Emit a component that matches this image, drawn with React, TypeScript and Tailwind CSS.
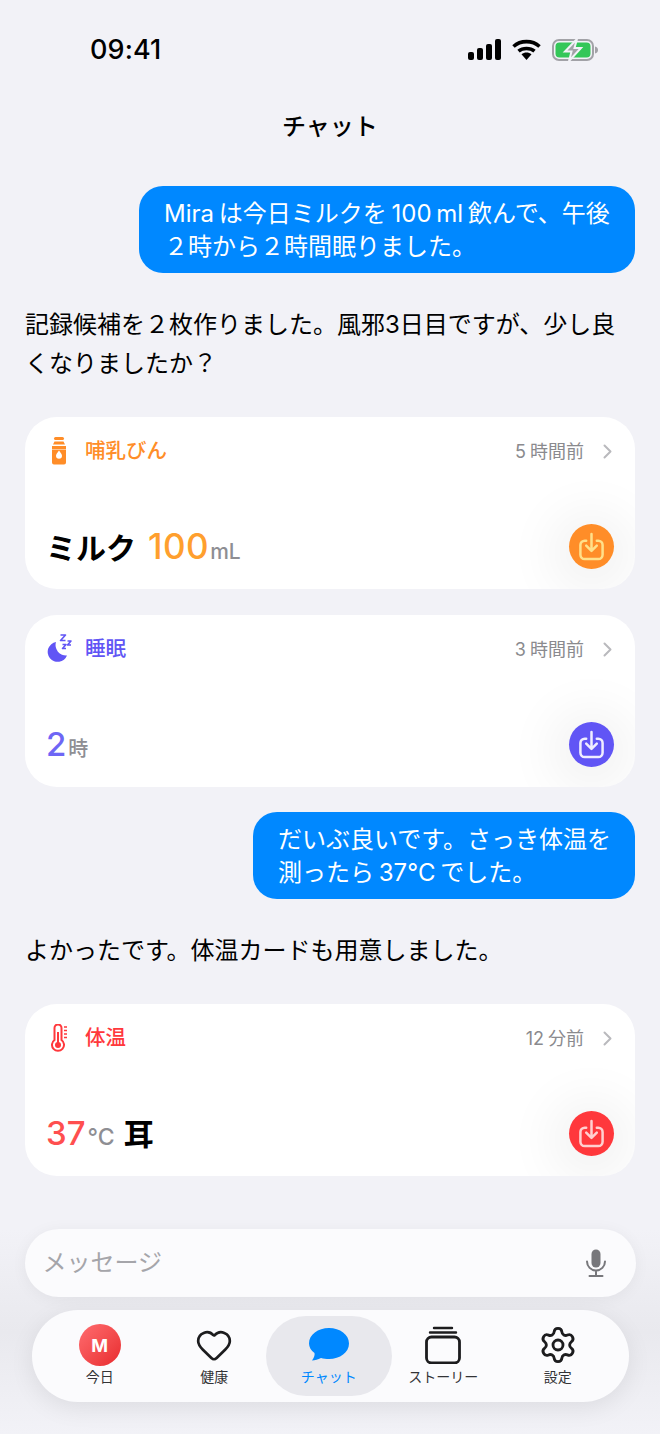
import { Heart, Settings } from "lucide-react";
import type { ReactNode } from "react";

const FONT = "font-['Inter','Noto_Sans_CJK_JP',sans-serif]";

function StatusBar() {
  return (
    <div className="flex h-[99px] items-center justify-between pl-[90px] pr-[62px]">
      <span className="text-[27px] font-medium leading-none tracking-[0.1px] text-black">09:41</span>
      <div className="flex items-center gap-[11px]">
        <svg width="33" height="21" viewBox="0 0 33 21" fill="#000">
          <rect x="0" y="13" width="6" height="8" rx="2" />
          <rect x="9" y="9" width="6" height="12" rx="2" />
          <rect x="18" y="5" width="6" height="16" rx="2" />
          <rect x="27" y="0" width="6" height="21" rx="2" />
        </svg>
        <svg width="29" height="21" viewBox="0 0 29 21" fill="none" stroke="#000" strokeWidth="3.6">
          <path d="M1.5 7.5C8.500 1 20.500 1 27.500 7.500" />
          <path d="M6.500 12.200C10.800 8.600 18.200 8.600 22.500 12.200" />
          <path d="M9.500 15.200 14.500 21l5-5.800C16.500 13 12.500 13 9.500 15.200Z" fill="#000" stroke="none" />
        </svg>
        <svg width="46" height="24" viewBox="0 0 46 24" fill="none">
          <rect x="1" y="2" width="40" height="20" rx="6" stroke="#a2a2a7" strokeWidth="2" />
          <rect x="3.500" y="4.500" width="35" height="15" rx="4" fill="#34c759" />
          <path d="M43 8.500c2 .5 3 1.800 3 3.500s-1 3-3 3.500z" fill="#a2a2a7" />
          <path d="M25 1 13 13.500H19.500L17 23 29 10H22.500Z" fill="#a2a2a7" stroke="#f2f2f7" strokeWidth="2" />
        </svg>
      </div>
    </div>
  );
}

function UserBubble({ width, lines }: { width: string; lines: string[] }) {
  return (
    <div className={`ml-auto rounded-[24px] bg-[#0088ff] pb-[10px] pl-[25px] pt-[11px] text-[24px] leading-[33px] text-white [word-spacing:-2px] ${width}`}>
      {lines.map((l) => (
        <div key={l} className="whitespace-nowrap">
          {l}
        </div>
      ))}
    </div>
  );
}

function SaveButton({ bg, stroke }: { bg: string; stroke: string }) {
  return (
    <div className={`flex size-[45px] items-center justify-center rounded-full shadow-[0_6px_50px_20px_rgba(0,0,0,0.05)] ${bg}`}>
      <svg width="27" height="29" viewBox="0 0 28 30" fill="none" stroke={stroke} strokeWidth="2.600" strokeLinecap="round" strokeLinejoin="round">
        <path d="M8.500 9H7a4.500 4.500 0 0 0-4.500 4.500v10A4.500 4.500 0 0 0 7 28h14a4.500 4.500 0 0 0 4.500-4.500v-10A4.500 4.500 0 0 0 21 9h-1.500" />
        <path d="M14 2v17M8.500 14l5.500 5.500 5.500-5.500" />
      </svg>
    </div>
  );
}

function Card({
  icon,
  title,
  titleColor,
  ago,
  save,
  children,
}: {
  icon: ReactNode;
  title: string;
  titleColor: string;
  ago: string;
  save: ReactNode;
  children: ReactNode;
}) {
  return (
    <div className="flex h-[172px] flex-col overflow-hidden rounded-[32px] bg-white px-[21px]">
      <div className="flex h-[68px] items-center">
        <div className="flex w-[39px] items-center">{icon}</div>
        <span className={`text-[20.500px] font-medium ${titleColor}`}>{title}</span>
        <span className="ml-auto text-[18px] text-[#8a8a8e] [word-spacing:-1px]">{ago}</span>
        <svg className="ml-[19px] mr-[2px]" width="9" height="15" viewBox="0 0 9 15" fill="none" stroke="#b9b9bd" strokeWidth="2" strokeLinecap="round" strokeLinejoin="round">
          <path d="M1.500 1.500 7.500 7.500 1.500 13.500" />
        </svg>
      </div>
      <div className="mb-[20px] mt-auto flex h-[45px] items-center justify-between">
        <div className="flex items-baseline">{children}</div>
        {save}
      </div>
    </div>
  );
}

function TabItem({ icon, label, active }: { icon: ReactNode; label: string; active?: boolean }) {
  return (
    <div className="flex justify-center">
      <div className={`flex shrink-0 flex-col items-center pb-[3px] ${active ? "h-[80px] w-[126px] justify-center rounded-[40px] bg-[#e8e8ed]" : "w-[100px]"}`}>
        <div className="flex h-[44px] items-center justify-center">{icon}</div>
        <span className={`mt-[1px] whitespace-nowrap text-[14px] leading-[18px] ${active ? "text-[#0088ff]" : "text-[#333336]"}`}>{label}</span>
      </div>
    </div>
  );
}

export default function App() {
  return (
    <div className={`relative flex h-[1434px] w-[660px] flex-col overflow-hidden bg-[#f2f2f7] ${FONT}`}>
      <StatusBar />
      <div className="text-center text-[24px] font-medium leading-[56px] text-black">チャット</div>
      <div className="flex flex-col px-[25px] pt-[31px]">
        <UserBubble width="w-[496px]" lines={["Mira は今日ミルクを 100 ml 飲んで、午後", "２時から２時間眠りました。"]} />
        <p className="mt-[32px] w-[600px] text-[24px] leading-[39px] text-black">
          記録候補を２枚作りました。風邪3日目ですが、少し良くなりましたか？
        </p>
        <div className="mt-[34px] flex flex-col gap-[26px]">
          <Card
            icon={
              <svg className="ml-[5px]" width="16" height="28" viewBox="0 0 16 28" fill="#ff8d28">
                <rect x="3" y="0" width="10" height="3" rx="1.500" />
                <path d="M3.500 4.500h9l1.500 3h-12zM1 9h14v3H1zM1 23h14v2.500a2 2 0 0 1-2 2H3a2 2 0 0 1-2-2z" />
                <path fillRule="evenodd" d="M1 12.500h14V23H1zM8 13.500c-1.800 2.500-3 3.800-3 5.300a3 3 0 0 0 6 0c0-1.500-1.200-2.800-3-5.300z" />
              </svg>
            }
            title="哺乳びん"
            titleColor="text-[#ff8d28]"
            ago="5 時間前"
            save={<SaveButton bg="bg-[#ff8d28]" stroke="#ffe08a" />}
          >
            <span className="text-[30px] font-semibold text-black">ミルク</span>
            <span className="ml-[12px] text-[35px] font-medium tracking-[0.5px] text-[#ff9f2e]">100</span>
            <span className="ml-[1px] text-[21px] font-medium text-[#8e8e93]">mL</span>
          </Card>
          <Card
            icon={
              <svg width="26" height="30" viewBox="0 0 26 30" fill="#6155f5">
                <path d="M10 8A10 10 0 1 0 21 21.500 10.500 10.500 0 0 1 10 8Z" />
                <g fill="none" stroke="#6155f5" strokeWidth="1.600" strokeLinejoin="round">
                  <path d="M14.500 1h5l-5 5.500h5" />
                  <path d="M21.500 7h3.500l-3.500 4h3.500" />
                  <path d="M16.500 10.500h3.500l-3.500 4h3.500" />
                </g>
              </svg>
            }
            title="睡眠"
            titleColor="text-[#6155f5]"
            ago="3 時間前"
            save={<SaveButton bg="bg-[#6155f5]" stroke="#f0eeff" />}
          >
            <span className="text-[33px] font-medium text-[#6e66f5]">2</span>
            <span className="ml-[2px] text-[20px] font-medium text-[#8e8e93]">時</span>
          </Card>
        </div>
        <div className="mt-[25px]">
          <UserBubble width="w-[382px]" lines={["だいぶ良いです。さっき体温を", "測ったら 37°C でした。"]} />
        </div>
        <p className="mt-[32px] text-[24px] leading-[39px] text-black">よかったです。体温カードも用意しました。</p>
        <div className="mt-[34px]">
          <Card
            icon={
              <svg className="ml-[5px]" width="18" height="28" viewBox="0 0 18 28" fill="none" stroke="#ff383c" strokeWidth="2">
                <path d="M3.500 4a3.500 3.500 0 0 1 7 0v12a6 6 0 1 1-7 0z" />
                <circle cx="7" cy="21" r="3" fill="#ff383c" stroke="none" />
                <path d="M7 21V8" />
                <path d="M13 3h3M13 6.500h3M13 10h3M13 13.500h3" strokeWidth="1.300" />
              </svg>
            }
            title="体温"
            titleColor="text-[#ff383c]"
            ago="12 分前"
            save={<SaveButton bg="bg-[#ff383c]" stroke="#ffd0d0" />}
          >
            <span className="text-[33px] font-medium text-[#ff4f4f]">37</span>
            <span className="ml-[2px] text-[23px] font-medium text-[#8e8e93]">°C</span>
            <span className="ml-[9px] text-[30px] font-semibold text-black">耳</span>
          </Card>
        </div>
      </div>

      <div className="mt-auto flex flex-col items-center bg-gradient-to-b from-[#f2f2f7]/0 via-[#e9e9ee] to-[#f2f2f7] pb-[32px]">
        <div className="flex h-[68px] w-[611px] items-center justify-between rounded-[34px] bg-[#fbfbfd] pl-[18px] pr-[30px] shadow-[0_2px_16px_rgba(0,0,0,0.05)]">
          <span className="text-[24px] text-[#a5a5aa]">メッセージ</span>
          <svg width="20" height="28" viewBox="0 0 20 28" fill="none" stroke="#77777b" strokeWidth="2" strokeLinecap="round">
            <rect x="5.500" y="0.500" width="9" height="18" rx="4.500" fill="#77777b" stroke="none" />
            <path d="M1 12.500a9 9 0 0 0 18 0M10 21.500V26M3.500 27h13" />
          </svg>
        </div>
        <div className="mt-[13px] grid h-[92px] w-[597px] grid-cols-[repeat(5,114.500px)] items-center rounded-[46px] bg-[#fbfbfd] pl-[11px] shadow-[0_6px_24px_rgba(0,0,0,0.08)]">
          <TabItem
            label="今日"
            icon={
              <div className="flex size-[42px] items-center justify-center rounded-full bg-gradient-to-br from-[#ff6b6f] to-[#e8262c] text-[18px] font-bold text-white">
                M
              </div>
            }
          />
          <TabItem icon={<Heart size={38} strokeWidth={1.700} color="#1c1c1e" />} label="健康" />
          <TabItem
            active
            label="チャット"
            icon={
              <svg width="40" height="34" viewBox="0 0 40 34" fill="#0088ff">
                <path d="M20 0C31 0 40 6.700 40 15.500S31 31 20 31C17 31 14.500 30.600 12 30 9 31.500 6 32.500 3 32.500 5 30 6 27 5.500 25 2 22.500 0 19 0 15.500 0 6.700 9 0 20 0Z" />
              </svg>
            }
          />
          <TabItem
            label="ストーリー"
            icon={
              <svg width="36" height="38" viewBox="0 0 36 38" fill="none" stroke="#1c1c1e" strokeWidth="2.400" strokeLinecap="round">
                <rect x="1.500" y="11" width="33" height="26" rx="5" strokeWidth="2.800" />
                <path d="M5 6.500h26M9 2h18" />
              </svg>
            }
          />
          <TabItem icon={<Settings size={40} strokeWidth={1.700} color="#1c1c1e" />} label="設定" />
        </div>
      </div>
    </div>
  );
}
